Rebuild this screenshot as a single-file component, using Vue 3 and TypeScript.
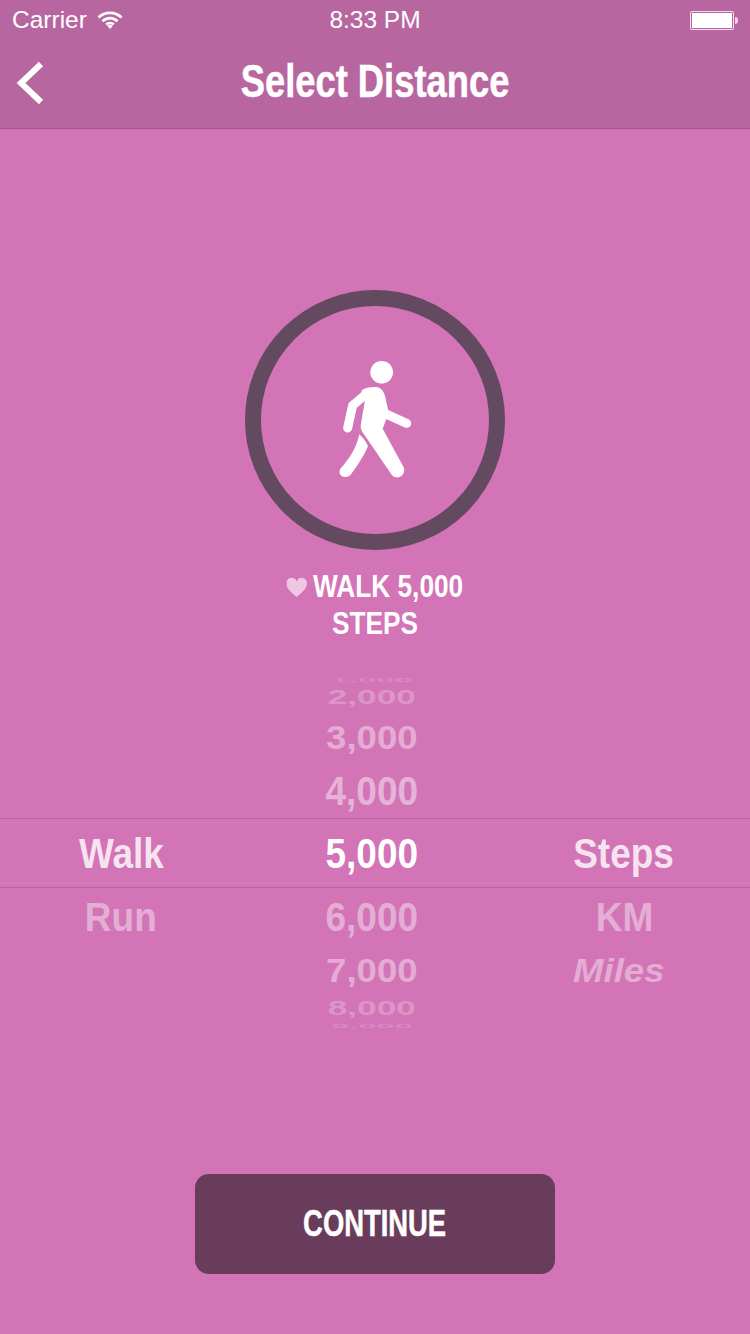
<template>
  <div class="screen">
    <header class="top">
      <div class="status">
        <div class="status-left">
          <span>Carrier</span>
          <svg class="wifi" width="26" height="18" viewBox="0 0 26 18">
            <path d="M1.500 6.500a16.500 16.500 0 0 1 23 0" />
            <path d="M5.500 10.200a10.600 10.600 0 0 1 15 0" />
            <path d="M9.200 13.600a5.400 5.400 0 0 1 7.600 0" />
            <path class="wifi-dot" d="M13 18l-2.600-3a3.600 3.600 0 0 1 5.200 0z" />
          </svg>
        </div>
        <span class="time">8:33 PM</span>
        <div class="battery">
          <div class="battery-body"><div class="battery-fill"></div></div>
          <div class="battery-nub"></div>
        </div>
      </div>
      <nav class="nav">
        <svg class="back" width="30" height="44" viewBox="0 0 30 44">
          <path d="M26 3L6 22l20 19" />
        </svg>
        <h1 class="title">Select Distance</h1>
      </nav>
    </header>

    <main class="body">
      <div class="ring">
        <svg width="110" height="140" viewBox="0 0 330 420">
          <circle cx="185" cy="67" r="34" fill="#fff" />
          <path
            fill="#fff"
            d="M124 122 C134 113 152 111 168 111 C184 112 192 125 196 142 L206 188 L188 236 L251 352 C260 376 232 392 216 376 L133 254 C122 240 120 232 124 215 L134 155 Z"
          />
          <path class="limb" d="M140 131 L98 166 L83 234" />
          <path class="limb" d="M194 190 L260 220" />
          <path
            fill="#fff"
            d="M118 253 C128 262 138 274 144 288 C134 314 114 344 92 374 C78 388 52 380 60 358 C84 330 108 300 118 253 Z"
          />
        </svg>
      </div>

      <p class="goal">
        <svg class="heart" width="25" height="19" viewBox="0 0 22 20" preserveAspectRatio="none">
          <path d="M11 20C4 14 0 11 0 6a5.600 5.600 0 0 1 11-2 5.600 5.600 0 0 1 11 2c0 5-4 8-11 14z" />
        </svg>
        WALK 5,000 STEPS
      </p>

      <section class="picker">
        <div
          v-for="row in rows"
          :key="row.mid"
          class="row"
          :class="{ selected: row.selected }"
          :style="{ height: row.height + 'px' }"
        >
          <span
            v-for="(text, i) in [row.left, row.mid, row.right]"
            :key="i"
            class="cell"
            :class="{ slant: text === 'Miles' }"
          >
            <span class="cell-text" :style="cellStyle(row, i)">{{ text }}</span>
          </span>
        </div>
      </section>

      <button class="continue"><span>CONTINUE</span></button>
    </main>
  </div>
</template>

<script setup lang="ts">
interface Row {
  left: string
  mid: string
  right: string
  height: number
  scaleX: number
  scaleY: number
  opacity: number
  selected?: boolean
}

const rows: Row[] = [
  { left: '', mid: '1,000', right: '', height: 8, scaleX: 0.76, scaleY: 0.12, opacity: 0.14 },
  { left: '', mid: '2,000', right: '', height: 26, scaleX: 0.82, scaleY: 0.46, opacity: 0.24 },
  { left: '', mid: '3,000', right: '', height: 54, scaleX: 0.85, scaleY: 0.78, opacity: 0.4 },
  { left: '', mid: '4,000', right: '', height: 54, scaleX: 0.86, scaleY: 0.96, opacity: 0.45 },
  { left: 'Walk', mid: '5,000', right: 'Steps', height: 70, scaleX: 0.86, scaleY: 1, opacity: 0.8, selected: true },
  { left: 'Run', mid: '6,000', right: 'KM', height: 58, scaleX: 0.86, scaleY: 0.96, opacity: 0.42 },
  { left: '', mid: '7,000', right: 'Miles', height: 48, scaleX: 0.85, scaleY: 0.78, opacity: 0.4 },
  { left: '', mid: '8,000', right: '', height: 28, scaleX: 0.82, scaleY: 0.46, opacity: 0.24 },
  { left: '', mid: '9,000', right: '', height: 8, scaleX: 0.76, scaleY: 0.12, opacity: 0.14 },
]

// wheel items are squashed vertically the further they are from the middle
function cellStyle(row: Row, i: number) {
  const opacity = row.selected && i === 1 ? 1 : row.opacity
  return { opacity, transform: `scale(${row.scaleX}, ${row.scaleY})` }
}
</script>

<style scoped>
.screen {
  background: #d274b6;
  color: #fff;
  display: flex;
  flex-direction: column;
  font-family: "Liberation Sans", Arial, sans-serif;
  height: 1334px;
  overflow: hidden;
  width: 750px;
}

.top {
  background: #b8669f;
  border-bottom: 1px solid #a3568c;
  height: 128px;
}

.status {
  align-items: center;
  display: grid;
  font-size: 24.500px;
  grid-template-columns: 1fr auto 1fr;
  height: 40px;
  padding: 0 12px;
}

.status-left {
  align-items: center;
  display: flex;
  gap: 10px;
}

.wifi {
  margin-top: -1px;
}

.wifi path {
  fill: none;
  stroke: #fff;
  stroke-width: 2.800;
}

.wifi .wifi-dot {
  fill: #fff;
  stroke: none;
}

.battery {
  align-items: center;
  display: flex;
  justify-content: flex-end;
}

.battery-body {
  border: 1px solid #f5dcee;
  border-radius: 2px;
  box-sizing: border-box;
  height: 19px;
  padding: 1px;
  width: 44px;
}

.battery-fill {
  background: #fff;
  height: 100%;
}

.battery-nub {
  background: #f2d5ea;
  border-radius: 0 3px 3px 0;
  height: 7px;
  margin-left: 1px;
  width: 3px;
}

.nav {
  align-items: center;
  display: flex;
  height: 82px;
  justify-content: center;
  position: relative;
}

.back {
  left: 15px;
  position: absolute;
  top: 21px;
}

.back path {
  fill: none;
  stroke: #fff;
  stroke-width: 6;
}

.title {
  font-size: 46px;
  font-weight: 700;
  margin: 0;
  -webkit-text-stroke: 0.5px #fff;
  transform: scaleX(0.79);
  white-space: nowrap;
}

.body {
  align-items: center;
  display: flex;
  flex: 1;
  flex-direction: column;
  padding-top: 161px;
}

.ring {
  align-items: center;
  border: 16px solid #634a60;
  border-radius: 50%;
  box-sizing: border-box;
  display: flex;
  height: 260px;
  justify-content: center;
  width: 260px;
}

.limb {
  fill: none;
  stroke: #fff;
  stroke-linecap: round;
  stroke-linejoin: round;
  stroke-width: 27;
}

.goal {
  font-size: 32px;
  font-weight: 700;
  line-height: 37px;
  margin: 18px 0 0;
  text-align: center;
  transform: scaleX(0.82);
  width: 240px;
}

.heart {
  margin-right: -2px;
}

.heart path {
  fill: #f0c6e4;
}

.picker {
  margin-top: 34px;
  width: 750px;
}

.row {
  display: grid;
  font-size: 43px;
  font-weight: 700;
  grid-template-columns: 242px 260px 244px;
  grid-template-rows: minmax(0, 1fr);
  line-height: 1;
}

.row.selected {
  border-bottom: 1px solid #b9629f;
  border-top: 1px solid #b9629f;
  box-shadow: inset 0 3px 0 #d274b6, inset 0 4px 0 #d67dba, inset 0 -3px 0 #d274b6, inset 0 -4px 0 #d67dba;
  box-sizing: border-box;
}

.cell {
  align-items: center;
  display: flex;
  justify-content: center;
}

.cell-text {
  display: block;
  white-space: nowrap;
}

.slant {
  font-style: italic;
  padding-right: 10px;
}

.continue {
  background: #693c5b;
  border: 0;
  border-radius: 14px;
  color: #fff;
  font-family: "Liberation Sans", Arial, sans-serif;
  font-size: 37px;
  font-weight: 700;
  height: 100px;
  margin-top: 144px;
  -webkit-text-stroke: 0.5px #fff;
  width: 360px;
}

.continue span {
  display: inline-block;
  transform: scaleX(0.74);
}
</style>
